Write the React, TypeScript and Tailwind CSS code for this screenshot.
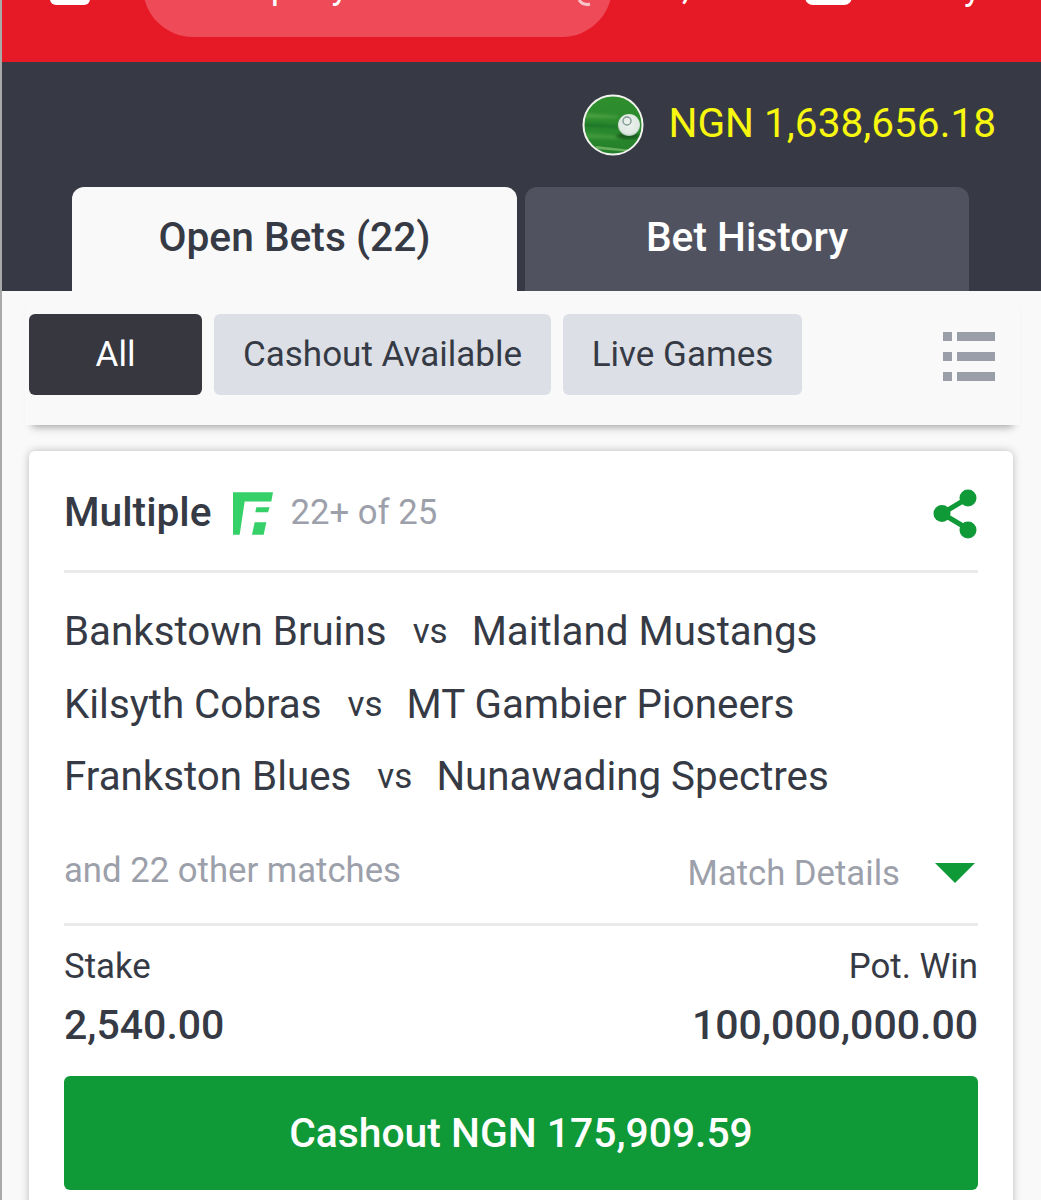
const matches = [
  ["Bankstown Bruins", "Maitland Mustangs"],
  ["Kilsyth Cobras", "MT Gambier Pioneers"],
  ["Frankston Blues", "Nunawading Spectres"],
];

function BallThumb() {
  return (
    <svg width="62" height="62" viewBox="0 0 62 62">
      <defs>
        <clipPath id="thumb">
          <circle cx="31" cy="31" r="29" />
        </clipPath>
        <radialGradient id="ball" cx="0.5" cy="0.45" r="0.6">
          <stop offset="0" stopColor="#eef3ee" />
          <stop offset="0.75" stopColor="#dfe8e2" />
          <stop offset="1" stopColor="#8fb39a" />
        </radialGradient>
        <linearGradient id="grass" x1="0" y1="0" x2="0" y2="1">
          <stop offset="0" stopColor="#2f8f2c" />
          <stop offset="0.5" stopColor="#2b8a2e" />
          <stop offset="1" stopColor="#237f2a" />
        </linearGradient>
        <filter id="soft">
          <feGaussianBlur stdDeviation="1.4" />
        </filter>
        <filter id="softer">
          <feGaussianBlur stdDeviation="0.7" />
        </filter>
      </defs>
      <g clipPath="url(#thumb)">
        <rect width="62" height="62" fill="url(#grass)" />
        <g filter="url(#soft)">
          <path d="M0 19 L36 22 L36 24 L0 24Z" fill="#5aa94a" opacity="0.7" />
          <path d="M0 29 L36 31 L36 34 L0 33Z" fill="#1b6f24" opacity="0.8" />
          <path d="M0 39 L40 42 L40 45 L0 44Z" fill="#4da344" opacity="0.7" />
        </g>
        <path d="M14 52 L50 56 L50 58 L14 55Z" fill="#78b96b" opacity="0.8" filter="url(#softer)" />
        <ellipse cx="46" cy="42" rx="12" ry="3" fill="#155a1c" filter="url(#soft)" />
        <circle cx="47" cy="31" r="11" fill="url(#ball)" filter="url(#softer)" />
        <circle cx="45" cy="27" r="4" fill="none" stroke="#7f9a97" strokeWidth="1.4" filter="url(#softer)" />
      </g>
      <circle cx="31" cy="31" r="29.5" fill="none" stroke="#f2f5ee" strokeWidth="2" />
    </svg>
  );
}

function ShareIcon() {
  return (
    <svg width="46" height="50" viewBox="0 0 46 50" className="text-[#0f9937]">
      <path d="M36 9 L10 24.5 L36 40" fill="none" stroke="currentColor" strokeWidth="5" />
      <circle cx="36" cy="9" r="8.5" fill="currentColor" />
      <circle cx="10" cy="24.5" r="8.5" fill="currentColor" />
      <circle cx="36" cy="41" r="8.5" fill="currentColor" />
    </svg>
  );
}

function FLogo() {
  return (
    <svg width="40" height="43" viewBox="0 0 120 128" className="text-[#36d068]">
      <path d="M0 0H120L115 28H35L20 128H0Z" fill="currentColor" />
      <path d="M70 45H110L105 60H67Z" fill="currentColor" />
      <path d="M65 90H100L92 128H57Z" fill="currentColor" />
    </svg>
  );
}

function ListIcon() {
  return (
    <div className="flex flex-col gap-[11px]">
      {[0, 1, 2].map((i) => (
        <div key={i} className="flex gap-[5px]">
          <div className="h-[9px] w-[9px] bg-[#9a9ea9]" />
          <div className="h-[9px] w-[38px] bg-[#9a9ea9]" />
        </div>
      ))}
    </div>
  );
}

export default function App() {
  return (
    <div className="h-[1200px] overflow-hidden border-l-2 border-[#a9a9a9] bg-[#f9f9f9] font-['Roboto',sans-serif] text-[#353a45]">
      {/* top bar, page is scrolled so only the bottom of it shows */}
      <header className="h-[62px] overflow-hidden bg-[#e61a27] text-white">
        <div className="-mt-[63px] flex h-[100px] items-center">
          <div className="ml-[48px] mt-[4px] h-[32px] w-[40px] rounded-md bg-white" />
          <div className="ml-[53px] flex h-[100px] w-[469px] items-center justify-between rounded-full bg-[#ee4a57] pl-[98px] pr-[20px] text-[36px] whitespace-nowrap">
            <span className="mt-[-2px] text-white">Input your text</span>
            <svg width="40" height="40" viewBox="0 0 40 40" className="text-[#f9c4c8]">
              <path d="M27 33 Q31 39 38 37" fill="none" stroke="currentColor" strokeWidth="3" />
            </svg>
          </div>
          <span className="ml-[70px] text-[36px]">,</span>
          <div className="ml-[116px] mt-[4px] h-[32px] w-[47px] rounded-lg bg-white" />
          <span className="ml-[112px] text-[36px]">y</span>
        </div>
      </header>

      <section className="h-[229px] bg-[#373a45]">
        <div className="flex h-[125px] items-center justify-end gap-[24px] pr-[45px]">
          <BallThumb />
          <span className="mt-[-2px] text-[40.6px] text-[#f7f70f]">NGN 1,638,656.18</span>
        </div>
        <div className="ml-[70px] flex h-[104px] gap-[8px]">
          <div className="flex w-[445px] items-center justify-center rounded-t-xl bg-[#f9f9f9] pb-[2px] text-[40.7px] font-medium">
            Open Bets (22)
          </div>
          <div className="flex w-[444px] items-center justify-center rounded-t-xl bg-[#50535f] pb-[2px] text-[40.7px] font-medium text-white">
            Bet History
          </div>
        </div>
      </section>

      <div className="ml-[23px] mr-[21px] flex h-[134px] items-start justify-between pl-[4px] pr-[25px] pt-[23px] shadow-[0_9px_8px_-7px_rgba(0,0,0,0.35)]">
        <div className="flex gap-[12px] text-[35px]">
          <div className="flex h-[81px] w-[173px] items-center justify-center rounded-md bg-[#37383f] pt-[2px] text-white">All</div>
          <div className="flex h-[81px] w-[337px] items-center justify-center rounded-md bg-[#dcdfe6] pt-[2px]">Cashout Available</div>
          <div className="flex h-[81px] w-[239px] items-center justify-center rounded-md bg-[#dcdfe6] pt-[2px]">Live Games</div>
        </div>
        <div className="pt-[18px]">
          <ListIcon />
        </div>
      </div>

      <div className="ml-[27px] mr-[28px] mt-[26px] rounded-md bg-white px-[35px] pb-[40px] shadow-[0_0_8px_rgba(0,0,0,0.25)]">
        <div className="flex h-[122px] items-center justify-between border-b-[3px] border-[#e9eaec] pt-[6px]">
          <div className="flex items-center">
            <span className="mt-[-2px] text-[40.7px] font-medium">Multiple</span>
            <span className="ml-[21px]">
              <FLogo />
            </span>
            <span className="ml-[18px] mt-[-3px] text-[34.7px] text-[#9ca0aa]">22+ of 25</span>
          </div>
          <ShareIcon />
        </div>

        <div className="flex flex-col pt-[23px]">
          {matches.map(([home, away]) => (
            <div key={home} className="flex h-[72.5px] items-center text-[40.3px]">
              <span>{home}</span>
              <span className="ml-[26px] mr-[24px] text-[35px]">vs</span>
              <span>{away}</span>
            </div>
          ))}
        </div>

        <div className="mt-[27px] flex h-[85px] items-start justify-between border-b-[3px] border-[#e9eaec] pt-[3px]">
          <span className="text-[34.7px] text-[#9ca0aa]">and 22 other matches</span>
          <div className="mt-[3px] flex items-center">
            <span className="text-[34.7px] text-[#9ca0aa]">Match Details</span>
            <svg width="40" height="20" viewBox="0 0 40 20" className="ml-[35px] mr-[3px] text-[#0f9937]">
              <path d="M0 0H40L20 20Z" fill="currentColor" />
            </svg>
          </div>
        </div>

        <div className="flex justify-between pt-[14px] text-[34.8px]">
          <span>Stake</span>
          <span>Pot. Win</span>
        </div>
        <div className="mt-[3px] flex justify-between text-[41px] font-medium">
          <span>2,540.00</span>
          <span>100,000,000.00</span>
        </div>

        <button className="mt-[20px] flex h-[114px] w-full items-center justify-center rounded-md bg-[#0f9937] text-[40.8px] font-medium text-white">
          Cashout NGN 175,909.59
        </button>
      </div>
    </div>
  );
}
